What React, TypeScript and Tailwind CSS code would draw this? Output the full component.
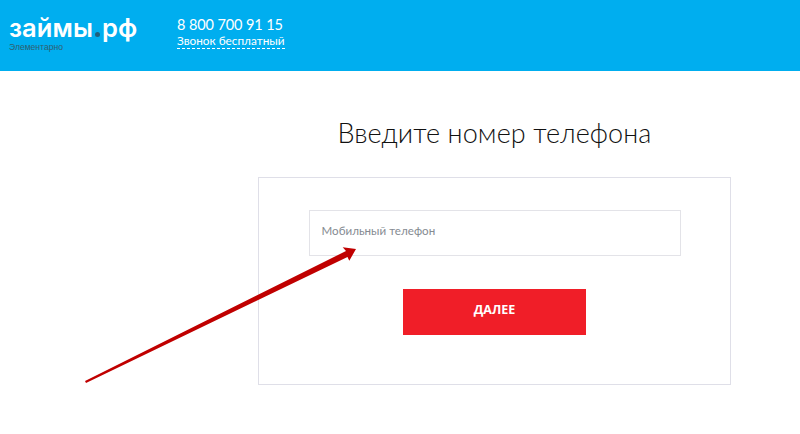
export default function App() {
    return (
        <div className="relative h-[434px] w-[800px] overflow-hidden bg-white font-['Lato','Noto_Sans',sans-serif]">
            <header className="flex h-[71px] items-start bg-[#00aeef] pl-[9px] text-white">
                <div className="w-[168px] pt-[13px]">
                    <div className="flex h-[30px] items-baseline font-['Inter',sans-serif] text-[25.5px] leading-[30px] font-semibold tracking-[0.1px]">
                        <span>займы</span>
                        <span className="mx-[2px] mb-[1px] h-[5px] w-[5px] rounded-full bg-[#1f5f7c]" />
                        <span>рф</span>
                    </div>
                    <div className="mt-[-1px] font-['Liberation_Sans',sans-serif] text-[8.6px] leading-[10px] text-[#30606f]">
                        Элементарно
                    </div>
                </div>
                <div className="w-[108px] pt-[16px]">
                    <div className="text-[14.5px] leading-[18px] tracking-[-0.1px] whitespace-nowrap">
                        8 800 700 91 15
                    </div>
                    <div className="border-b border-dashed border-white text-[11.8px] leading-[14px] whitespace-nowrap">
                        Звонок бесплатный
                    </div>
                </div>
            </header>

            <main className="ml-[258px] w-[473px]">
                <h1 className="mt-[43px] mb-[26px] text-center text-[27px] leading-[37px] font-light tracking-[0.1px] text-[#111111]">
                    Введите номер телефона
                </h1>
                <div className="flex h-[208px] flex-col items-center border border-[#dfdfe8] pt-[32px]">
                    <div className="flex h-[46px] w-[372px] items-center border border-[#e3e3e8] pb-[5px] pl-[12px] text-[11.6px] tracking-[0.02px] text-[#858b92]">
                        Мобильный телефон
                    </div>
                    <button className="mt-[33px] h-[46px] w-[183px] bg-[#f01e28] pb-[3px] font-['Open_Sans',sans-serif] text-[12.5px] font-bold text-white">
                        ДАЛЕЕ
                    </button>
                </div>
            </main>

            <svg
                className="absolute top-0 left-0"
                width="800"
                height="434"
                viewBox="0 0 800 434"
                fill="none"
            >
                <path
                    d="M85 381 L346 251 L342.7 247.3 L356 249 L349.3 260.7 L347.5 257 L86 383 Z"
                    fill="#c00000"
                />
            </svg>
        </div>
    );
}
